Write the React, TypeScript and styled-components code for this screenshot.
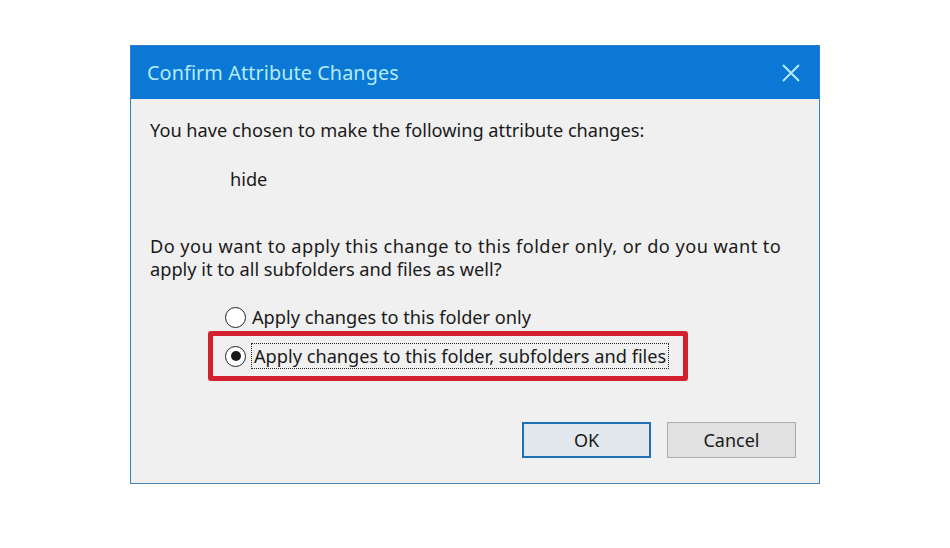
import React from "react";
import styled, { createGlobalStyle } from "styled-components";

const Global = createGlobalStyle`
    body {
        margin: 0;
        background: #ffffff;
        font-family: "Noto Sans", "Open Sans", "Liberation Sans", sans-serif;
    }
`

const Page = styled.div`
    width: 950px;
    height: 548px;
    padding: 45px 0 0 130px;
    box-sizing: border-box;
`

const Dialog = styled.section`
    width: 690px;
    height: 439px;
    box-sizing: border-box;
    display: flex;
    flex-direction: column;
    background: #f0f0f0;
    border: 1px solid #2f7fcc;
    border-bottom-color: #4c85b5;
`

const TitleBar = styled.header`
    height: 53px;
    flex-shrink: 0;
    display: flex;
    align-items: center;
    justify-content: space-between;
    background: #0a78d4;
    padding: 0 18px 0 16px;
`

const Title = styled.h1`
    margin: 0;
    font-size: 19.8px;
    font-weight: 400;
    color: #b4ebf7;
    letter-spacing: 0.1px;
`

const Body = styled.div`
    flex: 1;
    display: flex;
    flex-direction: column;
    padding: 20px 23px 25px 19px;
    color: #1a1a1a;
    font-size: 18.2px;
`

const Text = styled.p<{ $indent?: number; $mt?: number; $spread?: number }>`
    margin: ${(p) => p.$mt ?? 0}px 0 0 ${(p) => p.$indent ?? 0}px;
    line-height: 23px;
`

const Spread = styled.span`
    letter-spacing: 0.45px;
`

const Options = styled.div`
    display: flex;
    flex-direction: column;
    margin: 23px 0 0 75px;
`

const OptionRow = styled.label`
    display: flex;
    align-items: center;
    gap: 6px;
    height: 26px;
`

const Highlight = styled.div`
    margin: 1px 0 0 -17px;
    width: 480px;
    height: 50px;
    box-sizing: border-box;
    border: 5px solid #d3202e;
    border-radius: 3px;
    display: flex;
    align-items: center;
    padding-left: 12px;
`

const Radio = styled.span<{ $checked?: boolean }>`
    width: 21px;
    height: 21px;
    box-sizing: border-box;
    border-radius: 50%;
    border: 1.5px solid #222;
    background: #fff;
    display: flex;
    align-items: center;
    justify-content: center;
    flex-shrink: 0;
    &::after {
        content: "";
        width: 10px;
        height: 10px;
        border-radius: 50%;
        background: #1a1a1a;
        display: ${(p) => (p.$checked ? "block" : "none")};
    }
`

const Focus = styled.span`
    outline: 1.5px dotted #222;
    outline-offset: 0;
    padding: 0 2px;
    line-height: 24px;
`

const Buttons = styled.div`
    margin-top: auto;
    display: flex;
    justify-content: flex-end;
    gap: 16px;
`

const Button = styled.button<{ $default?: boolean }>`
    width: 129px;
    height: 36px;
    box-sizing: border-box;
    font-family: inherit;
    font-size: 18px;
    color: #1a1a1a;
    background: ${(p) => (p.$default ? "#e3e8ee" : "#e1e1e1")};
    border: ${(p) => (p.$default ? "2px solid #1f6fb5" : "1px solid #adadad")};
    padding: 0;
`

const Close = styled.svg`
    width: 20px;
    height: 20px;
`

export default function App() {
    return (
        <>
            <Global />
            <Page>
                <Dialog>
                    <TitleBar>
                        <Title>Confirm Attribute Changes</Title>
                        <Close viewBox="0 0 20 20">
                            <path d="M2 2 L18 18 M18 2 L2 18" stroke="#b4ebf7" strokeWidth="2" />
                        </Close>
                    </TitleBar>
                    <Body>
                        <Text>You have chosen to make the following attribute changes:</Text>
                        <Text $indent={80} $mt={26}>hide</Text>
                        <Text $mt={44}>
                            <Spread>Do you want to apply this change to this folder only, or do you want to</Spread>
                            <br />
                            apply it to all subfolders and files as well?
                        </Text>
                        <Options>
                            <OptionRow>
                                <Radio />
                                Apply changes to this folder only
                            </OptionRow>
                            <Highlight>
                                <OptionRow>
                                    <Radio $checked />
                                    <Focus>Apply changes to this folder, subfolders and files</Focus>
                                </OptionRow>
                            </Highlight>
                        </Options>
                        <Buttons>
                            <Button $default>OK</Button>
                            <Button>Cancel</Button>
                        </Buttons>
                    </Body>
                </Dialog>
            </Page>
        </>
    );
}
